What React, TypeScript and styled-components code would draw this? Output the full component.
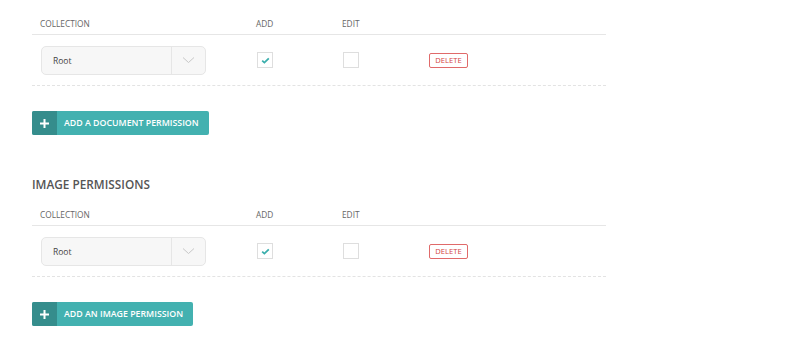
import React from 'react'
import styled, { createGlobalStyle } from 'styled-components';

const GlobalStyle = createGlobalStyle`
    body {
        margin: 0;
        background: #fff;
        font-family: "Open Sans", "Liberation Sans", sans-serif;
        color: #333;
    }
`;

const Page = styled.div`
    padding: 0 0 0 32px;
    width: 574px;
`;

const Section = styled.section`
    display: flex;
    flex-direction: column;
    align-items: flex-start;
`;

const Heading = styled.h2`
    margin: 43px 0 0;
    font-size: 11.8px;
    line-height: 13px;
    font-weight: 600;
    color: #555;
    text-transform: uppercase;
`;

const Grid = styled.div`
    display: grid;
    grid-template-columns: 216px 86px 86px 1fr;
    width: 100%;
`;

const HeadRow = styled(Grid)`
    height: 34px;
    border-bottom: 1px solid #e6e6e6;
    align-items: end;
`;

const HeadCell = styled.div`
    padding: 0 0 4px 8px;
    font-size: 8.3px;
    line-height: 12px;
    color: #666;
    text-transform: uppercase;
`;

const Row = styled(Grid)`
    height: 50px;
    border-bottom: 1px dashed #e3e3e3;
    align-items: center;
`;

const Cell = styled.div`
    padding-left: 9px;
    display: flex;
    align-items: center;
`;

const Select = styled.div`
    width: 165px;
    height: 29px;
    box-sizing: border-box;
    display: flex;
    background: #f7f7f7;
    border: 1px solid #e6e6e6;
    border-radius: 5px;
`;

const SelectValue = styled.span`
    flex: 1;
    display: flex;
    align-items: center;
    padding-left: 11px;
    font-size: 8.5px;
    color: #444;
`;

const SelectArrow = styled.span`
    width: 33px;
    border-left: 1px solid #e6e6e6;
    display: flex;
    align-items: center;
    justify-content: center;
`;

const Check = styled.span`
    width: 16px;
    height: 16px;
    box-sizing: border-box;
    border: 1px solid #dedede;
    background: #fff;
    display: flex;
    align-items: center;
    justify-content: center;
`;

const DeleteButton = styled.button`
    width: 39px;
    height: 15px;
    padding: 0;
    border: 1px solid #e06a6a;
    border-radius: 2px;
    background: #fff;
    color: #d34545;
    font-family: inherit;
    font-size: 7.6px;
    line-height: 13px;
    text-transform: uppercase;
`;

const AddButton = styled.button`
    margin-top: 25px;
    height: 24px;
    display: flex;
    align-items: stretch;
    padding: 0;
    border: 0;
    border-radius: 2px;
    overflow: hidden;
    background: #43b1b0;
    color: #fff;
    font-family: inherit;
    font-size: 8.8px;
    font-weight: 600;
    text-transform: uppercase;
`;

const PlusBox = styled.span`
    width: 25px;
    background: #358d8c;
    display: flex;
    align-items: center;
    justify-content: center;
`;

const ButtonLabel = styled.span`
    display: flex;
    align-items: center;
    padding: 0 10px 0 7px;
`;

const Chevron = () => (
    <svg width="13" height="8" viewBox="0 0 13 8">
        <path d="M1 1.5 L6.5 6.5 L12 1.5" fill="none" stroke="#c8c8c8" strokeWidth="1" />
    </svg>
);

const Tick = () => (
    <svg width="9" height="7" viewBox="0 0 9 7">
        <path d="M1.2 3.6 L3.4 5.6 L7.8 1.4" fill="none" stroke="#3aaeac" strokeWidth="1.8" />
    </svg>
);

const Plus = () => (
    <svg width="9" height="9" viewBox="0 0 9 9">
        <path d="M4.5 0 V9 M0 4.5 H9" stroke="#fff" strokeWidth="2" />
    </svg>
);

interface PermissionTableProps {
    add: boolean;
    edit: boolean;
}

const PermissionTable: React.FC<PermissionTableProps> = ({ add, edit }) => (
    <>
        <HeadRow>
            <HeadCell>Collection</HeadCell>
            <HeadCell>Add</HeadCell>
            <HeadCell>Edit</HeadCell>
            <HeadCell />
        </HeadRow>
        <Row>
            <Cell>
                <Select>
                    <SelectValue>Root</SelectValue>
                    <SelectArrow><Chevron /></SelectArrow>
                </Select>
            </Cell>
            <Cell><Check>{add && <Tick />}</Check></Cell>
            <Cell><Check>{edit && <Tick />}</Check></Cell>
            <Cell><DeleteButton>Delete</DeleteButton></Cell>
        </Row>
    </>
);

export default function App() {
    return (
        <Page>
            <GlobalStyle />
            <Section>
                <PermissionTable add edit={false} />
                <AddButton>
                    <PlusBox><Plus /></PlusBox>
                    <ButtonLabel>Add a document permission</ButtonLabel>
                </AddButton>
            </Section>
            <Section>
                <Heading>Image permissions</Heading>
                <PermissionTable add edit={false} />
                <AddButton>
                    <PlusBox><Plus /></PlusBox>
                    <ButtonLabel>Add an image permission</ButtonLabel>
                </AddButton>
            </Section>
        </Page>
    );
}
